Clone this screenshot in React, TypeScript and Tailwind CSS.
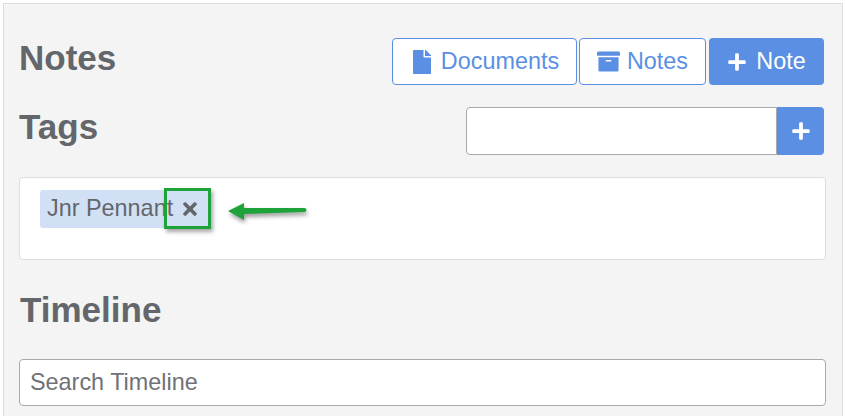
import { FaArchive, FaFile, FaPlus, FaTimes } from "react-icons/fa";

function OutlineButton({ icon, label, width }: { icon: React.ReactNode; label: string; width: string }) {
  return (
    <button className={`h-[47px] ${width} flex items-center justify-center gap-[7px] rounded-[4px] border border-[#5a8fe3] bg-white text-[#5a8fe3]`}>
      {icon}
      <span>{label}</span>
    </button>
  );
}

export default function App() {
  return (
    <div className="h-[416px] w-[846px] overflow-hidden bg-white pl-[3px] pr-[3px] pt-[3px] font-['Liberation_Sans',Arial,sans-serif] text-[23.4px] text-[#63666a]">
      <div className="h-[420px] border border-b-0 border-[#dcdcdc] bg-[#f4f4f4] pl-[15px] pr-[16px]">
        <div className="flex h-[81px] items-start justify-between pt-[34px] pr-[2px]">
          <h2 className="pl-[-1px] text-[35px] font-bold leading-[40px]">Notes</h2>
          <div className="flex">
            <OutlineButton icon={<FaFile className="text-[24px]" />} label="Documents" width="w-[185px]" />
            <OutlineButton icon={<FaArchive className="text-[23px]" />} label="Notes" width="ml-[2px] w-[127px]" />
            <button className="ml-[3px] flex h-[47px] w-[115px] items-center justify-center gap-[9px] rounded-[4px] bg-[#5a8fe3] text-white">
              <FaPlus className="text-[20px]" />
              <span>Note</span>
            </button>
          </div>
        </div>

        <div className="flex h-[70px] items-start justify-between pt-[22px] pr-[2px]">
          <h2 className="text-[35px] font-bold leading-[40px]">Tags</h2>
          <div className="flex">
            <input className="h-[48px] w-[311px] rounded-l-[4px] border border-[#a9a9ad] bg-white" />
            <button className="flex h-[48px] w-[47px] items-center justify-center rounded-r-[4px] bg-[#5a8fe3] text-white">
              <FaPlus className="text-[20px]" />
            </button>
          </div>
        </div>

        <div className="relative mt-[22px] h-[83px] rounded-[4px] border border-[#dedede] bg-white pl-[20px] pt-[12px]">
          <div className="flex h-[38px] w-[168px] items-center gap-[7px] rounded-[3px] bg-[#d2e0f6] pl-[7px]">
            <span>Jnr Pennant</span>
            <FaTimes className="text-[20px]" />
          </div>
          {/* callout drawn over the chip */}
          <div className="absolute left-[144px] top-[10px] h-[41px] w-[47px] border-[3px] border-[#1ea33a] shadow-[2px_3px_4px_rgba(0,0,0,0.35)]" />
          <svg className="absolute left-[206px] top-[18px]" width="86" height="30" viewBox="0 0 86 30">
            <g style={{ filter: "drop-shadow(1px 3px 2px rgba(0,0,0,0.4))" }}>
              <path d="M2 15 L18 7 L18 12 L79 12 Q82 14 79 16 L18 18 L18 24 Z" fill="#1ea33a" />
            </g>
          </svg>
        </div>

        <h2 className="mt-[30px] pl-[1px] text-[35px] font-bold leading-[40px]">Timeline</h2>

        <input
          className="mt-[29px] h-[47px] w-full rounded-[4px] border border-[#a9a9a9] bg-white px-[10px] placeholder:text-[#6f7276]"
          placeholder="Search Timeline"
        />
      </div>
    </div>
  );
}
